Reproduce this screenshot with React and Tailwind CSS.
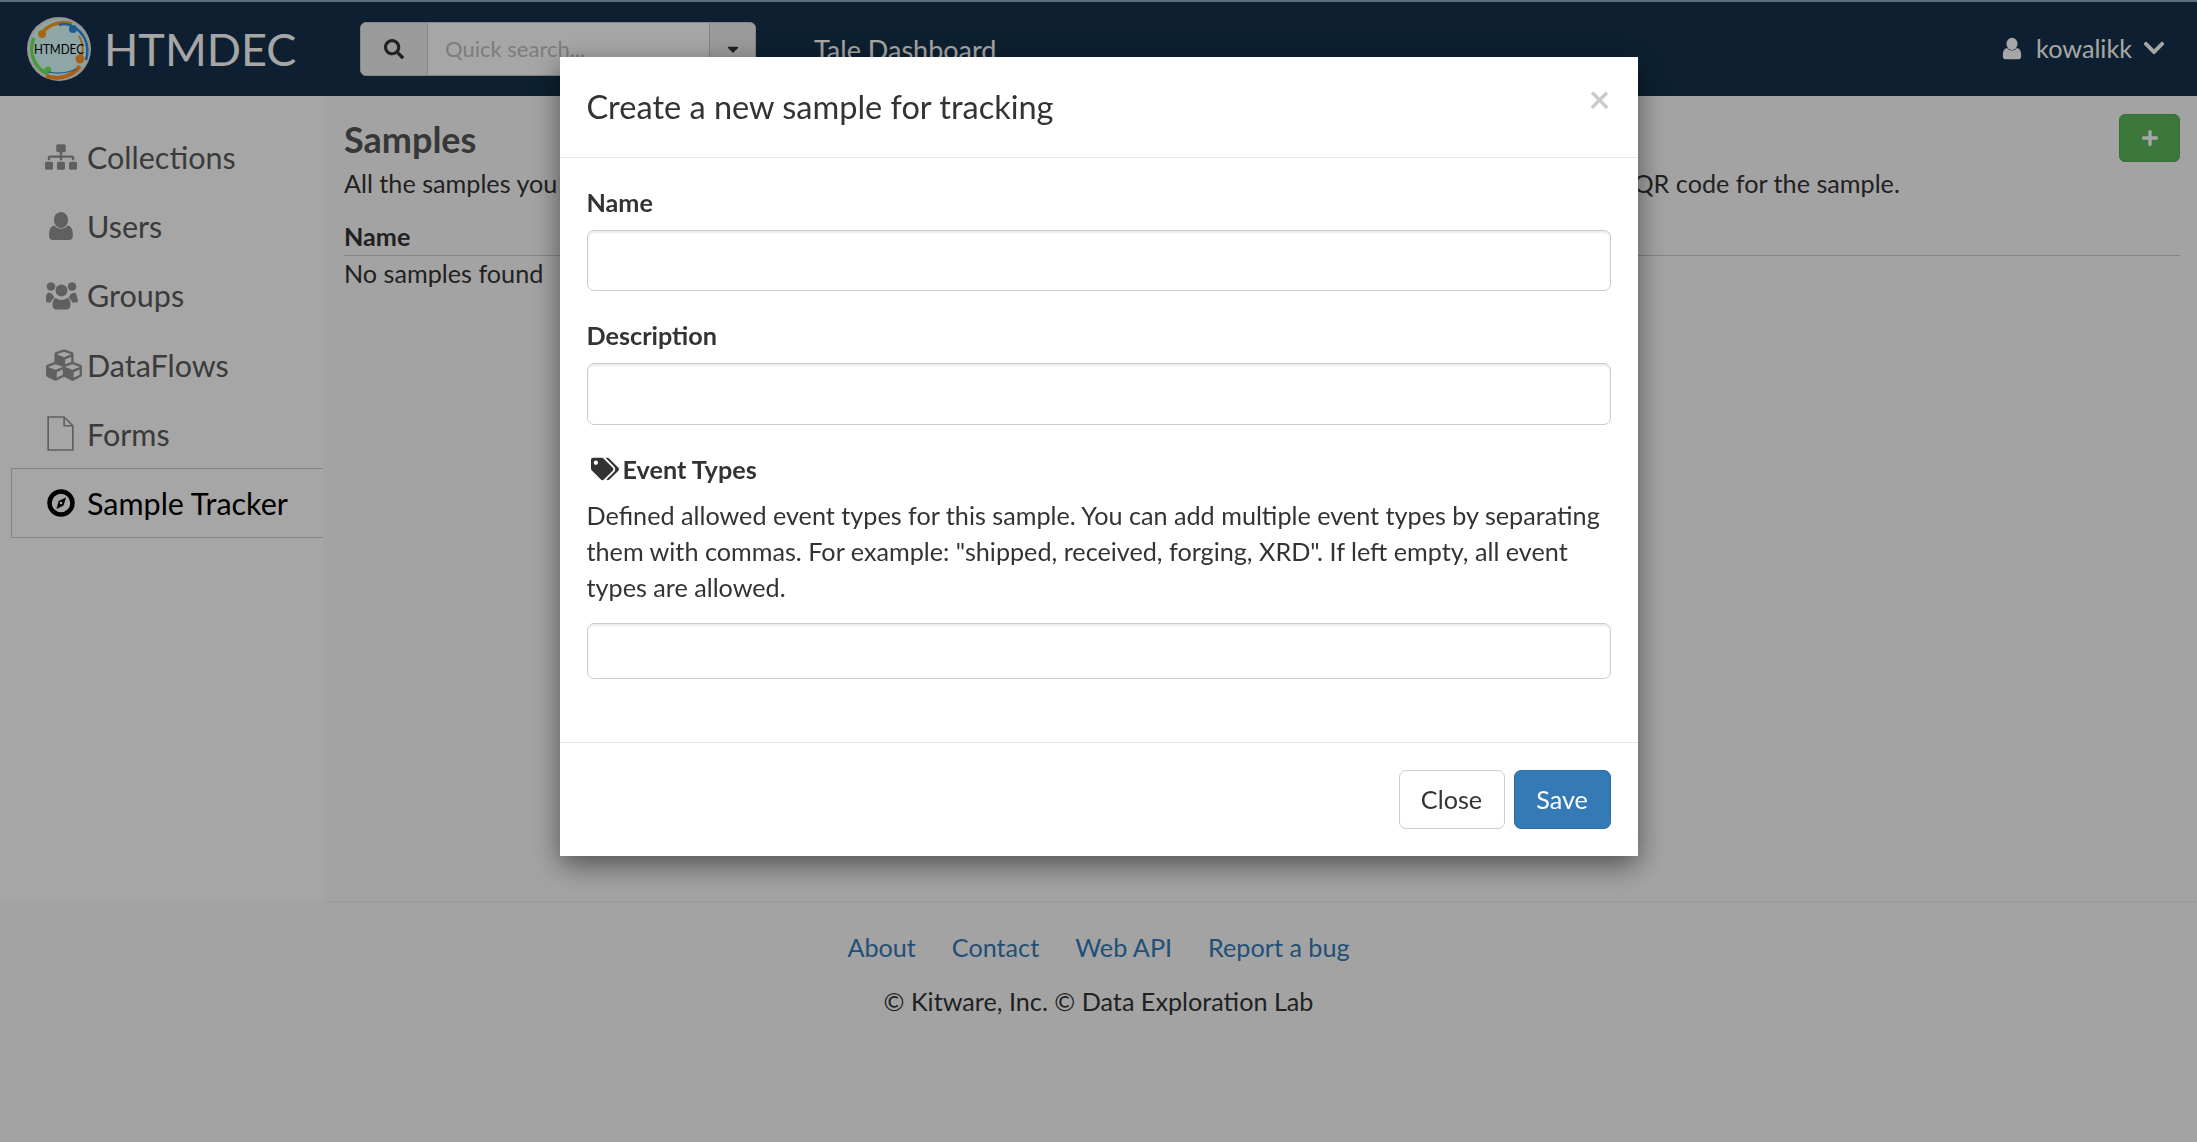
import { FaCubes, FaSearch, FaSitemap, FaTags, FaPlus, FaChevronDown, FaCaretDown } from "react-icons/fa";

function UserIcon({ className }) {
  return (
    <svg viewBox="0 0 24 26" className={className} fill="currentColor">
      <ellipse cx="12" cy="7.5" rx="6.6" ry="7.5" />
      <path d="M6 12.5c1.5 2 3.6 3 6 3s4.500-1 6-3c3.500.6 5 3.500 5 8.500v1.500c0 2-1.500 3.500-3.500 3.500h-15C2.500 26 1 24.500 1 22.500V21c0-5 1.500-7.900 5-8.500z" />
    </svg>
  );
}

function UsersIcon({ className }) {
  return (
    <svg viewBox="0 0 33 28" className={className} fill="currentColor">
      <circle cx="6" cy="5" r="4.300" />
      <circle cx="27" cy="5" r="4.300" />
      <circle cx="16.500" cy="9" r="6" />
      <path d="M1 17c0-3.500 1-6 3-6 1 .9 2.200 1.300 3.500 1.300.4 1.600 1.200 3 2.300 4-2 .8-3.300 2.400-3.900 4.700H2.500C1.500 21 1 20 1 17z" />
      <path d="M32 17c0-3.500-1-6-3-6-1 .9-2.200 1.300-3.500 1.300-.4 1.600-1.200 3-2.300 4 2 .8 3.300 2.400 3.900 4.700h4.400c1 0 1.500-1 1.500-4z" />
      <path d="M11 16.500c1.400 1.200 3.400 1.900 5.500 1.900s4.100-.7 5.500-1.900c2.600.5 3.500 3.500 3.500 7 0 2.600-1.500 4.500-3.500 4.500H11c-2 0-3.500-1.900-3.500-4.500 0-3.500.9-6.500 3.500-7z" />
    </svg>
  );
}

function FileIcon({ className }) {
  return (
    <svg viewBox="0 0 26 34" className={className} fill="none" stroke="currentColor" strokeWidth="1.600">
      <path d="M1 1h15.500L25 9.500V33H1z" />
      <path d="M16.500 1v8.500H25" />
    </svg>
  );
}

function CompassIcon({ className }) {
  return (
    <svg viewBox="0 0 28 28" className={className}>
      <circle cx="14" cy="14" r="11.500" fill="none" stroke="currentColor" strokeWidth="4.500" />
      <path d="M19 8.500l-2.500 8-7 3.500 2.200-8z" fill="currentColor" />
      <circle cx="14" cy="14" r="1.300" fill="#fff" />
    </svg>
  );
}

function Logo() {
  return (
    <svg viewBox="0 0 66 66" className="w-[66px] h-[66px] shrink-0">
      <circle cx="33" cy="33" r="32" fill="#e6e6e6" />
      <circle cx="33" cy="33" r="29.500" fill="#dcffff" />
      <path d="M14 20C20 9 34 4 46 8" fill="none" stroke="#ffa117" strokeWidth="3.500" />
      <circle cx="16" cy="18" r="4" fill="#ffa117" />
      <path d="M33 9c8-3 20 2 26 14 3 7 3 14 1 21" fill="none" stroke="#288de4" strokeWidth="2.500" />
      <circle cx="47" cy="13" r="4" fill="#288de4" />
      <path d="M53 20c6 10 4 20-1 25" fill="none" stroke="#ff9428" strokeWidth="2" />
      <circle cx="54" cy="43" r="4.500" fill="#ff9428" />
      <path d="M54 50c-8 11-22 14-34 10" fill="none" stroke="#ff9428" strokeWidth="4" />
      <path d="M8 22C2 36 8 52 22 58" fill="none" stroke="#72ed5c" strokeWidth="3.500" />
      <circle cx="22" cy="54" r="3.500" fill="#72ed5c" />
      <path d="M22 56c10 2 20 1 28-3" fill="none" stroke="#288de4" strokeWidth="1.200" />
      <text x="33" y="38" textAnchor="middle" fontFamily="Lato, sans-serif" fontSize="13" fill="#000" textLength="50" lengthAdjust="spacingAndGlyphs">HTMDEC</text>
    </svg>
  );
}

const navItems = [
  { label: "Collections", icon: <FaSitemap className="w-[32px] h-[32px]" /> },
  { label: "Users", icon: <UserIcon className="w-[26px] h-[28px] ml-[3px]" /> },
  { label: "Groups", icon: <UsersIcon className="w-[33px] h-[31px]" /> },
  { label: "DataFlows", icon: <FaCubes className="w-[38px] h-[36px]" /> },
  { label: "Forms", icon: <FileIcon className="w-[27px] h-[35px] ml-[2px]" /> },
  { label: "Sample Tracker", icon: <CompassIcon className="w-[28px] h-[28px] ml-[2px]" />, active: true },
];

const footerLinks = ["About", "Contact", "Web API", "Report a bug"];

export default function App() {
  return (
    <div className="relative min-h-screen h-[1142px] overflow-hidden bg-white font-['Lato',sans-serif] text-[25.2px] leading-[36px] text-[#333]">
      <header className="h-[96px] border-t-2 border-[#8aacc5] bg-[#14314a] flex items-center text-white">
        <div className="ml-[26px] w-[334px] flex items-center gap-[12px]">
          <Logo />
          <span className="text-[45px] leading-none">HTMDEC</span>
        </div>
        <div className="w-[396px] h-[54px] flex items-stretch bg-white border border-[#ccc] rounded-[6px] text-[#333]">
          <div className="w-[67px] shrink-0 flex items-center justify-center bg-[#eee] border-r border-[#ccc] rounded-l-[6px]">
            <FaSearch className="w-[20px] h-[20px]" />
          </div>
          <input
            type="text"
            placeholder="Quick search..."
            className="flex-1 min-w-0 pl-[17px] text-[22px] outline-none placeholder:text-[#c0c0c0]"
          />
          <div className="w-[46px] shrink-0 flex items-center justify-center bg-[#eee] border-l border-[#ccc] rounded-r-[6px]">
            <FaCaretDown className="w-[18px] h-[18px]" />
          </div>
        </div>
        <span className="ml-[58px] text-[27px] leading-none">Tale Dashboard</span>
        <div className="ml-auto mr-[31px] flex items-center -mt-[2px]">
          <UserIcon className="w-[20px] h-[23px] mr-[14px]" />
          <span>kowalikk</span>
          <FaChevronDown className="w-[24px] h-[24px] ml-[10px]" />
        </div>
      </header>

      <div className="flex h-[1046px]">
        <aside className="w-[323px] shrink-0 pt-[26.5px] text-[30.5px] text-[#5b5b5b]">
          {navItems.map((item) => (
            <div
              key={item.label}
              className={
                item.active
                  ? "ml-[11px] h-[69.2px] flex items-center pl-[33px] border border-r-0 border-[#ccc] bg-white text-black"
                  : "ml-[11px] h-[69.2px] flex items-center pl-[33px] border border-r-0 border-transparent"
              }
            >
              <span className={item.active ? "w-[42px] shrink-0 flex items-center" : "w-[42px] shrink-0 flex items-center text-[#949494]"}>
                {item.icon}
              </span>
              <span>{item.label}</span>
            </div>
          ))}
        </aside>

        <div className="flex-1 min-w-0 flex flex-col">
          <main className="h-[806px] pl-[21px] pr-[17px] pt-[18px] bg-[#fbfbfb] border-b border-[#eee]">
            <div className="h-[51px] flex items-start justify-between">
              <h2 className="text-[36px] leading-[50px] font-bold text-[#555]">Samples</h2>
              <button className="w-[61px] h-[48px] flex items-center justify-center rounded-[6px] bg-[#5cb85c] border border-[#4cae4c] text-white">
                <FaPlus className="w-[18px] h-[18px]" />
              </button>
            </div>
            <p className="whitespace-nowrap">
              All the samples you have access to are listed here. Click on a sample name to see its events, add an event or print the QR code for the sample.
            </p>
            <div className="mt-[17px] pb-[1px] border-b border-[#ccc] font-bold">Name</div>
            <div className="-mt-[1px]">No samples found</div>
          </main>
          <footer className="pt-[27px] text-center bg-[#fbfbfb] flex-1 -ml-[323px]">
            <div className="flex justify-center gap-[36px] text-[#337ab7]">
              {footerLinks.map((link) => (
                <a key={link}>{link}</a>
              ))}
            </div>
            <div className="mt-[18px]">© Kitware, Inc. © Data Exploration Lab</div>
          </footer>
        </div>
      </div>

      <div className="fixed inset-0 bg-black/35 flex justify-center items-start pt-[57px]">
        <div className="w-[1078px] h-[799px] bg-white flex flex-col shadow-[0_9px_27px_rgba(0,0,0,0.5)]">
          <div className="h-[101px] shrink-0 border-b border-[#e5e5e5] pl-[27px] pr-[27px] flex items-center justify-between">
            <h4 className="text-[32.5px] leading-none">Create a new sample for tracking</h4>
            <span className="text-[38px] leading-none font-bold text-black opacity-20 -mt-[18px]">×</span>
          </div>
          <div className="flex-1 px-[27px] pt-[26px]">
            <label className="block font-bold">Name</label>
            <input type="text" className="mt-[10px] block w-full h-[61px] border border-[#ccc] rounded-[7px] shadow-[inset_0_2px_2px_rgba(0,0,0,0.075)] outline-none" />
            <label className="mt-[26px] block font-bold">Description</label>
            <input type="text" className="mt-[10px] block w-full h-[62px] border border-[#ccc] rounded-[7px] shadow-[inset_0_2px_2px_rgba(0,0,0,0.075)] outline-none" />
            <label className="mt-[26px] flex items-center font-bold">
              <FaTags className="ml-[4px] mr-[4px] w-[28px] h-[24px]" />
              Event Types
            </label>
            <p className="mt-[10px]">
              Defined allowed event types for this sample. You can add multiple event types by separating them with commas. For example: "shipped, received, forging, XRD". If left empty, all event types are allowed.
            </p>
            <input type="text" className="mt-[18px] block w-full h-[56px] border border-[#ccc] rounded-[7px] shadow-[inset_0_2px_2px_rgba(0,0,0,0.075)] outline-none" />
          </div>
          <div className="h-[114px] shrink-0 border-t border-[#e5e5e5] px-[27px] pt-[27px] flex justify-end items-start gap-[9px]">
            <button className="w-[106px] h-[59px] pb-[2px] border border-[#ccc] rounded-[7px] bg-white text-[#333]">Close</button>
            <button className="w-[97px] h-[59px] pb-[2px] border border-[#2e6da4] rounded-[7px] bg-[#337ab7] text-white">Save</button>
          </div>
        </div>
      </div>
    </div>
  );
}
